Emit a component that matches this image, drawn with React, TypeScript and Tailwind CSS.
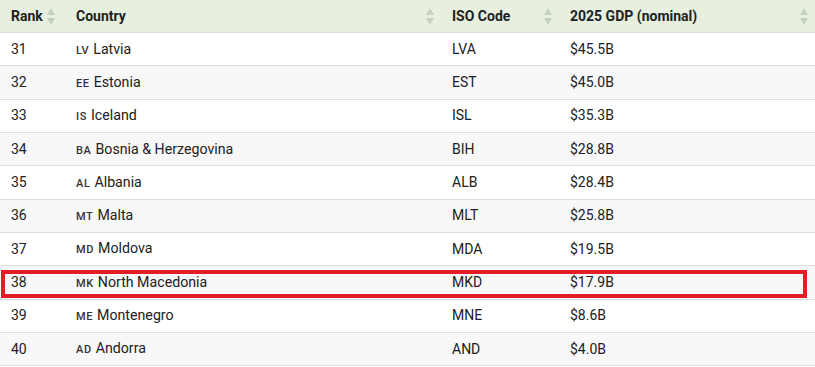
const rows = [
  { rank: 31, code: 'LV', name: 'Latvia', iso: 'LVA', gdp: '$45.5B' },
  { rank: 32, code: 'EE', name: 'Estonia', iso: 'EST', gdp: '$45.0B' },
  { rank: 33, code: 'IS', name: 'Iceland', iso: 'ISL', gdp: '$35.3B' },
  { rank: 34, code: 'BA', name: 'Bosnia & Herzegovina', iso: 'BIH', gdp: '$28.8B' },
  { rank: 35, code: 'AL', name: 'Albania', iso: 'ALB', gdp: '$28.4B' },
  { rank: 36, code: 'MT', name: 'Malta', iso: 'MLT', gdp: '$25.8B' },
  { rank: 37, code: 'MD', name: 'Moldova', iso: 'MDA', gdp: '$19.5B' },
  { rank: 38, code: 'MK', name: 'North Macedonia', iso: 'MKD', gdp: '$17.9B' },
  { rank: 39, code: 'ME', name: 'Montenegro', iso: 'MNE', gdp: '$8.6B' },
  { rank: 40, code: 'AD', name: 'Andorra', iso: 'AND', gdp: '$4.0B' },
]

function SortIcon() {
  return (
    <svg width="10" height="20" viewBox="0 0 10 20" className="shrink-0">
      <path d="M5 2 L9 9 L1 9 Z" fill="#c6d0be" />
      <path d="M1 12 L9 12 L5 19 Z" fill="#c6d0be" />
    </svg>
  )
}

function HeaderCell({ label, className }: { label: string; className: string }) {
  return (
    <div className={`flex items-center justify-between pl-[11px] pr-[6px] ${className}`}>
      <span>{label}</span>
      <SortIcon />
    </div>
  )
}

export default function App() {
  return (
    <div className="w-[815px] h-[367px] overflow-hidden bg-white text-[14px] text-[#212121]" style={{ fontFamily: 'Roboto, "Liberation Sans", sans-serif' }}>
      <div className="flex h-[33px] bg-[#e7efdf] border-b border-[#d9dfd3] font-bold">
        <HeaderCell label="Rank" className="w-[65px] justify-start gap-[3px]" />
        <HeaderCell label="Country" className="w-[376px]" />
        <HeaderCell label="ISO Code" className="w-[118px]" />
        <HeaderCell label="2025 GDP (nominal)" className="flex-1" />
      </div>
      {rows.map((r, i) => (
        <div
          key={r.rank}
          className={`relative flex items-center h-[33.33px] border-b border-[#dedede] ${i % 2 === 1 ? 'bg-[#f8f8f8]' : 'bg-white'}`}
        >
          <div className="w-[65px] pl-[11px]">{r.rank}</div>
          <div className="w-[376px] pl-[11px] flex items-baseline">
            <span className="text-[11px] font-medium tracking-[0.6px] mr-[4px] text-[#333]">{r.code}</span>
            <span className="text-[14.2px]">{r.name}</span>
          </div>
          <div className="w-[118px] pl-[11px]">{r.iso}</div>
          <div className="flex-1 pl-[11px]">{r.gdp}</div>
          {r.rank === 38 && (
            <div className="absolute left-[1px] top-[4px] w-[806px] h-[28px] border-[4px] border-[#e31d25]" />
          )}
        </div>
      ))}
    </div>
  )
}
